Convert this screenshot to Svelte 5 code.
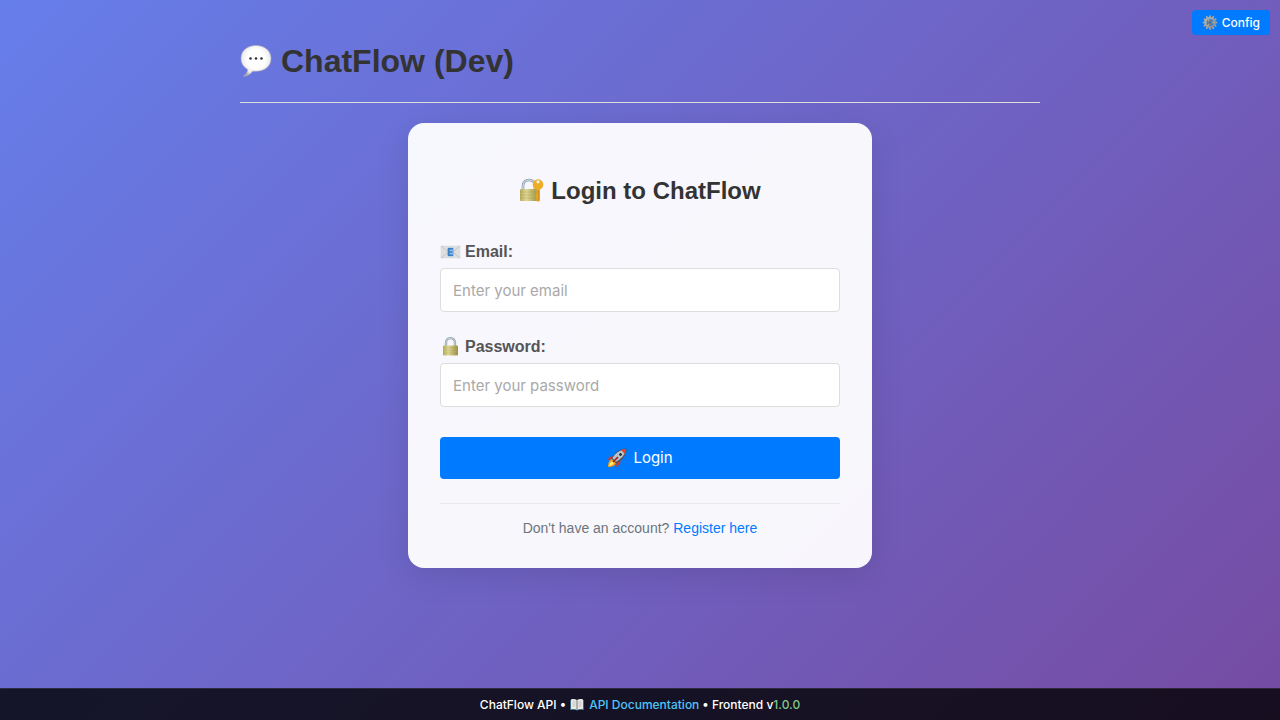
<script lang="ts">
  let email = $state('');
  let password = $state('');
</script>

<div class="page">
  <button class="config" type="button">
    <svg width="16" height="15" viewBox="0 0 32 32" aria-hidden="true">
      <defs>
        <linearGradient id="gear" x1="0" y1="0" x2="1" y2="1">
          <stop offset="0" stop-color="#b8b9b8" /><stop offset="1" stop-color="#858789" />
        </linearGradient>
      </defs>
      <g fill="#a3a4a3">
        {#each Array(12) as _, i}
          <path d="M13.500 6l1-5.500h3l1 5.500z" transform="rotate({i * 30} 16 16)" />
        {/each}
      </g>
      <circle cx="16" cy="16" r="9.5" fill="none" stroke="url(#gear)" stroke-width="5" />
      <circle cx="16" cy="16" r="4" fill="#1976d2" stroke="#77797b" stroke-width="3.500" />
      <path d="M20 16h6M14 19l-4 6M14 13l-4-6" stroke="#a5a5a2" stroke-width="3" />
    </svg>
    <span>Config</span>
  </button>

  <main>
    <header>
      <h1>
        <svg width="32" height="34" viewBox="0 0 32 34" aria-hidden="true">
          <defs>
            <radialGradient id="bubble" cx=".5" cy=".43" r=".6">
              <stop offset=".5" stop-color="#fff" /><stop offset=".8" stop-color="#ececec" /><stop offset="1" stop-color="#a9a9a9" />
            </radialGradient>
          </defs>
          <path d="M16 0.500C7 0.500 1 6 1 13.500c0 5 2.800 8.500 6.500 10.800.3 2.500-1.200 4.600-4 7 4.500-.4 7-2.200 9-5.100H16c9 0 15-5.200 15-12.700S25 0.500 16 0.500z" fill="url(#bubble)" stroke="#b1b1b5" stroke-width=".6" />
          <g fill="#333"><circle cx="10.500" cy="13.500" r="1.300" /><circle cx="16" cy="13.500" r="1.300" /><circle cx="21.500" cy="13.500" r="1.300" /></g>
        </svg>
        <span>ChatFlow (Dev)</span>
      </h1>
    </header>

    <section class="card">
      <h2>
        <svg width="25" height="26" viewBox="0 0 25 26" aria-hidden="true">
          <defs>
            <linearGradient id="brass" x1="0" y1="0" x2="1" y2="0">
              <stop offset="0" stop-color="#b4ac5c" /><stop offset=".35" stop-color="#e0d892" /><stop offset="1" stop-color="#9b9145" />
            </linearGradient>
          </defs>
          <path d="M4 12V8c0-8 12-8 12 0v4" fill="none" stroke="#788b9c" stroke-width="2.500" />
          <path d="M4 12V8c0-8 12-8 12 0v4" fill="none" stroke="#c7d7e3" stroke-width="1.500" />
          <rect x="1" y="11" width="18" height="12" rx="1" fill="url(#brass)" />
          <path d="M1 14h18M1 17h18M1 20h18" stroke="#96904b" stroke-width=".7" opacity=".4" />
          <path d="M17.500 10h3.500v12.500l-1.700 1.500-1.800-1.500v-1.500l-1.500-1 1.500-1-1.500-1.500 1.500-1z" fill="#e9a51e" />
          <circle cx="19" cy="6.500" r="5.300" fill="#edad27" /><circle cx="19" cy="3.800" r="1.600" fill="#f7f5ef" />
          <path d="M19.500 12v10" stroke="#c98a18" stroke-width=".7" />
        </svg>
        <span>Login to ChatFlow</span>
      </h2>

      <form onsubmit={(event) => event.preventDefault()}>
        <div class="field">
          <label for="email">
            <svg width="21" height="20" viewBox="0 0 21 20" aria-hidden="true">
              <rect x="1" y="4" width="19" height="12" fill="#dedfe0" stroke="#d5d5d7" stroke-width=".5" />
              <path d="M1 16l7-6M20 16l-7-6M1 4l9.500 8L20 4" fill="none" stroke="#bdbfc2" stroke-width=".8" />
              <rect x="7" y="5.500" width="7" height="9" rx="2" fill="#8dbdeb" />
              <path d="M13 6.700H8.800v6.500H13M9 10h3.500" fill="none" stroke="#397fc6" stroke-width="1.500" />
            </svg>
            <span>Email:</span>
          </label>
          <input id="email" type="email" placeholder="Enter your email" bind:value={email} />
        </div>

        <div class="field">
          <label for="password">
            <svg width="21" height="20" viewBox="0 0 21 20" aria-hidden="true">
              <path d="M6 10V6c0-6.500 9-6.500 9 0v4" fill="none" stroke="#8798a5" stroke-width="2.300" />
              <path d="M6 10V6c0-6.500 9-6.500 9 0v4" fill="none" stroke="#c6d1d7" stroke-width="1.200" />
              <rect x="3" y="8.500" width="15" height="10" rx="1" fill="url(#brass)" />
              <path d="M3 11h15M3 13.500h15M3 16h15" stroke="#9b9553" stroke-width=".6" opacity=".4" />
            </svg>
            <span>Password:</span>
          </label>
          <input id="password" type="password" placeholder="Enter your password" bind:value={password} />
        </div>

        <button class="submit" type="submit">
          <svg width="21" height="20" viewBox="0 0 21 20" aria-hidden="true">
            <path d="M7 8l-5 1-1 3 5-1zM10 13l-1 6 4-3 1-6z" fill="#d93822" />
            <path d="M5 11c-3 1-4 4-4 8 4 0 7-1 8-4z" fill="#f49b18" />
            <path d="M5 13c-2 1-2.500 3-3 5 2-.3 4-1 5-3z" fill="#ffed65" />
            <path d="M5 10C8 5 13 1 19 1c.5 6-4 11-10 14z" fill="#b5c2cb" stroke="#394652" stroke-width=".8" />
            <path d="M14 2c2-1 3.500-1 5-1 .2 2-.1 3.500-1 5z" fill="#e04430" />
            <path d="M8 14c5-2 9-6 10-10 0 5-4 9-9 11z" fill="#4c5761" />
            <circle cx="13.500" cy="6.500" r="2" fill="#263849" stroke="#eef1ef" stroke-width=".7" />
            <path d="M6 14l5-5" stroke="#a91f19" stroke-width="1.700" />
          </svg>
          <span>Login</span>
        </button>
      </form>

      <p class="register">Don't have an account? <a href="#register">Register here</a></p>
    </section>
  </main>

  <footer>
    <span>ChatFlow API •</span>
    <a href="#docs">
      <svg width="16" height="14" viewBox="0 0 16 14" aria-hidden="true">
        <path d="M1 2h14v10H9l-1 1-1-1H1z" fill="#376779" />
        <path d="M2 1.500c2-.7 4-.5 6 .5 2-1 4-1.200 6-.5v9.700c-2-.5-4-.4-6 .5-2-.9-4-1-6-.5z" fill="#e8e8e5" />
        <path d="M8 2v9.500" stroke="#77777b" />
        <path d="M3.500 4h3M3.500 6h3M3.500 8h3M9.500 4h3M9.500 6h3M9.500 8h3" stroke="#b4b4b6" stroke-width=".7" />
      </svg>
      <span>API Documentation</span>
    </a>
    <span>• Frontend v<span class="version">1.0.0</span></span>
  </footer>
</div>

<style>
  :global(body) {
    margin: 0;
  }

  .page {
    position: relative;
    box-sizing: border-box;
    display: flex;
    flex-direction: column;
    min-height: 100vh;
    background: linear-gradient(135deg, #667eea 0%, #764ba2 100%);
    font-family: "Liberation Sans", Arial, sans-serif;
    color: #333;
  }

  svg {
    display: block;
    flex-shrink: 0;
  }

  .config {
    position: absolute;
    top: 10px;
    right: 10px;
    display: flex;
    align-items: center;
    gap: 4px;
    padding: 5px 10px;
    border: 0;
    border-radius: 4px;
    background: #007bff;
    color: #fff;
    font: 500 12px/15px Inter, sans-serif;
    cursor: pointer;
  }

  main {
    flex: 1;
    box-sizing: border-box;
    width: 100%;
    max-width: 840px;
    margin: 0 auto;
    padding: 20px;
  }

  header {
    padding: 23px 0 22px;
    margin-bottom: 20px;
    border-bottom: 1px solid #ddd;
  }

  h1,
  h2,
  label {
    display: flex;
    align-items: center;
  }

  h1 {
    gap: 9px;
    margin: 0;
    font-size: 32px;
    line-height: 37px;
  }

  .card {
    box-sizing: border-box;
    width: 100%;
    max-width: 464px;
    margin: 0 auto;
    padding: 54px 32px 31px;
    border-radius: 16px;
    background: rgba(255, 255, 255, 0.95);
    box-shadow: 0 8px 32px rgba(0, 0, 0, 0.1);
  }

  h2 {
    justify-content: center;
    gap: 7px;
    margin: 0 0 36px;
    font-size: 24px;
    line-height: 28px;
  }

  .field {
    margin-bottom: 24px;
  }

  label {
    gap: 4px;
    margin-bottom: 5px;
    color: #555;
    font-size: 16px;
    font-weight: 700;
    line-height: 22px;
  }

  input {
    display: block;
    box-sizing: border-box;
    width: 100%;
    height: 44px;
    padding: 0 12px;
    border: 1px solid #ddd;
    border-radius: 4px;
    background: #fff;
    color: #333;
    font: 400 15px/20px Inter, sans-serif;
  }

  input::placeholder {
    color: #a9a9a9;
    opacity: 1;
  }

  .submit {
    display: flex;
    align-items: center;
    justify-content: center;
    gap: 5px;
    width: 100%;
    margin-top: 30px;
    padding: 11px;
    border: 0;
    border-radius: 4px;
    background: #007bff;
    color: #fff;
    font: 400 15px/20px Inter, sans-serif;
    cursor: pointer;
  }

  .register {
    margin: 24px 0 0;
    padding-top: 15px;
    border-top: 1px solid #e9e9ed;
    color: #6c757d;
    font-size: 14px;
    line-height: 18px;
    text-align: center;
  }

  a {
    color: #007bff;
    text-decoration: none;
  }

  footer {
    display: flex;
    align-items: center;
    justify-content: center;
    gap: 3px;
    padding: 8px;
    border-top: 1px solid rgba(255, 255, 255, 0.1);
    background: rgba(0, 0, 0, 0.8);
    color: #fff;
    font: 500 12px/15px Inter, sans-serif;
  }

  footer a {
    display: flex;
    align-items: center;
    gap: 4px;
    color: #4fc3f7;
  }

  .version {
    color: #81c784;
  }
</style>
